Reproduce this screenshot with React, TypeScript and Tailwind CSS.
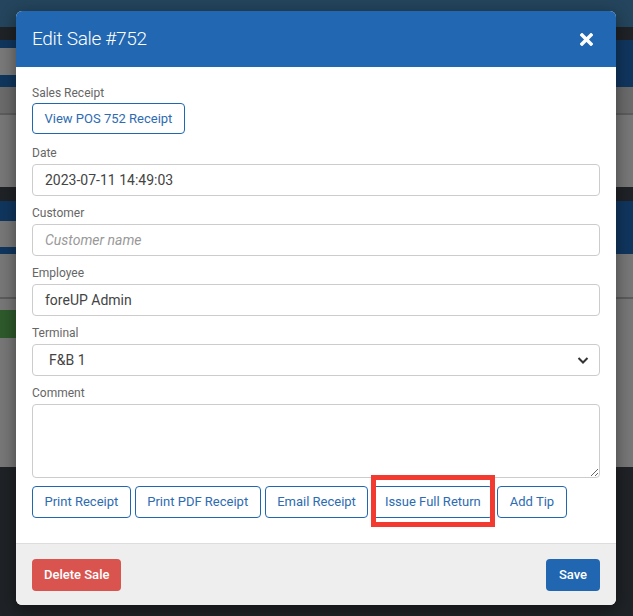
import { ReactNode } from "react";

const font = { fontFamily: "Roboto, 'Liberation Sans', sans-serif" };

function Field({ label, children }: { label: string; children: ReactNode }) {
  return (
    <div className="mb-2">
      <div className="h-[17px] mb-[3px] text-[12px] leading-[18px] text-[#666]">{label}</div>
      {children}
    </div>
  );
}

function TextInput({ value, placeholder }: { value?: string; placeholder?: string }) {
  return (
    <div className="h-8 rounded border border-[#ccc] bg-white px-3 flex items-center text-[14px]">
      {value ? (
        <span className="text-[#444]">{value}</span>
      ) : (
        <span className="text-[#999] italic">{placeholder}</span>
      )}
    </div>
  );
}

function OutlineButton({ children, className = "" }: { children: ReactNode; className?: string }) {
  return (
    <button
      className={
        "h-8 rounded border border-[#2166b0] bg-white px-[11.5px] text-[13px] text-[#2d6bb2] whitespace-nowrap " +
        className
      }
    >
      {children}
    </button>
  );
}

function Backdrop() {
  return (
    <div className="flex flex-col h-[616px] w-full">
      <div className="h-[27px] bg-[#24455d]" />
      <div className="h-[13px] bg-[#1f2226]" />
      <div className="h-[8px] bg-[#10365e]" />
      <div className="h-[39px] flex">
        <div className="w-4 flex flex-col">
          <div className="h-[27px] bg-[#797979]" />
          <div className="flex-1 bg-[#10365e]" />
        </div>
        <div className="flex-1 bg-[#10365e]" />
      </div>
      <div className="h-[26px] bg-[#6b6b6b]" />
      <div className="h-[2px] bg-[#5c5c5c]" />
      <div className="h-[72px] bg-[#777]" />
      <div className="h-[14px] bg-[#1f2226]" />
      <div className="h-[53px] flex">
        <div className="w-4 flex flex-col">
          <div className="h-[20px] bg-[#10365e]" />
          <div className="h-[26px] bg-[#777]" />
          <div className="flex-1 bg-[#10365e]" />
        </div>
        <div className="flex-1 bg-[#10365e]" />
      </div>
      <div className="h-[43px] bg-[#777]" />
      <div className="h-[2px] bg-[#5c5c5c]" />
      <div className="h-[168px] flex">
        <div className="w-4 flex flex-col">
          <div className="h-[11px] bg-[#777]" />
          <div className="h-[28px] bg-[#2e5a2c]" />
          <div className="flex-1 bg-[#777]" />
        </div>
        <div className="flex-1 bg-[#777]" />
      </div>
      <div className="flex-1 bg-[#1f2226]" />
    </div>
  );
}

export default function App() {
  return (
    <div className="relative w-[633px] h-[616px] overflow-hidden" style={font}>
      <Backdrop />

      <div className="absolute left-4 top-[11px] w-[600px] rounded-md bg-white shadow-[0_4px_16px_rgba(0,0,0,0.45)] overflow-hidden">
        {/* header */}
        <div className="h-14 bg-[#2167b1] flex items-center justify-between pl-4 pr-[23px]">
          <h2 className="text-[19px] font-light text-white tracking-[-0.3px]">Edit Sale #752</h2>
          <svg width="13" height="13" viewBox="0 0 13 13" aria-hidden="true">
            <path d="M2 2 L11 11 M11 2 L2 11" stroke="white" strokeWidth="3.4" strokeLinecap="square" />
          </svg>
        </div>

        {/* body */}
        <div className="px-4 pt-[17px] pb-[25px]">
          <div className="mb-[10px]">
            <div className="h-[17px] mb-[2px] text-[12px] leading-[18px] text-[#666]">Sales Receipt</div>
            <OutlineButton className="h-[31px]">View POS 752 Receipt</OutlineButton>
          </div>

          <Field label="Date">
            <TextInput value="2023-07-11 14:49:03" />
          </Field>
          <Field label="Customer">
            <TextInput placeholder="Customer name" />
          </Field>
          <Field label="Employee">
            <TextInput value="foreUP Admin" />
          </Field>
          <Field label="Terminal">
            <div className="h-8 rounded border border-[#ccc] bg-white pl-4 pr-[9px] flex items-center justify-between text-[14px] text-[#444]">
              <span>F&amp;B 1</span>
              <svg width="14" height="14" viewBox="0 0 14 14" aria-hidden="true">
                <path d="M2.5 5 L7 9.5 L11.5 5" fill="none" stroke="#333" strokeWidth="2" />
              </svg>
            </div>
          </Field>
          <Field label="Comment">
            <textarea className="block w-full h-[74px] rounded border border-[#ccc] bg-white px-3 py-2 text-[14px] outline-none" />
          </Field>

          <div className="flex gap-1">
            <OutlineButton>Print Receipt</OutlineButton>
            <OutlineButton>Print PDF Receipt</OutlineButton>
            <OutlineButton>Email Receipt</OutlineButton>
            <div className="relative">
              <OutlineButton>Issue Full Return</OutlineButton>
              <div className="absolute -left-px -right-[2px] -top-[11px] -bottom-[9px] border-[5px] border-[#f23a30] pointer-events-none" />
            </div>
            <OutlineButton>Add Tip</OutlineButton>
          </div>
        </div>

        {/* footer */}
        <div className="h-[62px] border-t border-[#dddddd] bg-[#eeeeee] px-4 flex items-center justify-between">
          <button className="h-8 px-3 rounded bg-[#d9534f] text-white text-[13px] font-medium">Delete Sale</button>
          <button className="h-8 px-[13px] rounded bg-[#2166b0] text-white text-[13px] font-medium">Save</button>
        </div>
      </div>
    </div>
  );
}
